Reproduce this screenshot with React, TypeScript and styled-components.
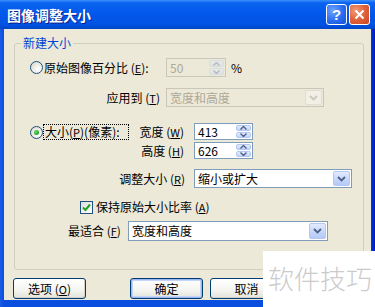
import React from 'react';
import styled, { createGlobalStyle } from 'styled-components';

const Global = createGlobalStyle`
	html, body {
		margin: 0;
		padding: 0;
		background: #fff;
	}
	body {
		font-family: "Noto Sans CJK SC", "DejaVu Sans", sans-serif;
		font-size: 12px;
	}
`

const Frame = styled.div`
	position: relative;
	width: 375px;
	height: 307px;
	display: flex;
	flex-direction: column;
	background: linear-gradient(90deg, #1B5CE6 0px, #0A4EDF 4px, #0A4EDF 368px, #0019C8 375px);
	overflow: hidden;
`

const TitleBar = styled.div`
	height: 29px;
	flex: none;
	display: flex;
	align-items: center;
	padding: 0 5px 0 7px;
	background: linear-gradient(180deg, #3C8FFA 0%, #0A64F0 10%, #0258EC 45%, #0052E2 85%, #0045C6 100%);
`

const Title = styled.span`
	flex: 1;
	color: #fff;
	font-weight: bold;
	font-size: 14px;
	letter-spacing: 0;
	text-shadow: 1px 1px #0A1D8A;
`

const CaptionButton = styled.div<{ $close?: boolean }>`
	width: 19px;
	height: 19px;
	margin-left: 2px;
	border: 1px solid #fff;
	border-radius: 3px;
	display: flex;
	align-items: center;
	justify-content: center;
	background: ${p => p.$close
		? 'radial-gradient(circle at 30% 30%, #F29A7A 0%, #E0623A 50%, #C9461F 100%)'
		: 'radial-gradient(circle at 30% 30%, #6FA3FF 0%, #2A6CF0 55%, #1450D8 100%)'};
	color: #fff;
	font-weight: bold;
	font-size: 15px;
	font-family: "Liberation Sans", sans-serif;
`

const Body = styled.div`
	flex: 1;
	margin: 0 4px 7px;
	background: #ECE9D8;
	display: flex;
	flex-direction: column;
	color: #000;
`

const Group = styled.fieldset`
	margin: 7px 7px 0 10px;
	padding: 0 0 28px;
	border: 1px solid #D0D0BF;
	border-radius: 3px;
	min-width: 0;
`

const Legend = styled.legend`
	margin-left: 6px;
	padding: 0 2px;
	line-height: 14px;
	color: #0046D5;
	font-size: 12px;
`

const Row = styled.div<{ $mt: number; $ml?: number; $top?: boolean }>`
	display: flex;
	align-items: ${p => (p.$top ? 'flex-start' : 'center')};
	margin-top: ${p => p.$mt}px;
	padding-left: ${p => p.$ml ?? 0}px;
	line-height: 14px;
	white-space: nowrap;
`

const Label = styled.span<{ $w?: number; $right?: boolean; $gap?: number }>`
	display: inline-block;
	width: ${p => (p.$w ? `${p.$w}px` : 'auto')};
	text-align: ${p => (p.$right ? 'right' : 'left')};
	margin-right: ${p => p.$gap ?? 0}px;
	flex: none;
`

const Key = styled.span`
	text-decoration: underline;
	font-size: 11px;
`

const Radio = styled.span<{ $checked?: boolean }>`
	box-sizing: border-box;
	width: 13px;
	height: 13px;
	border-radius: 50%;
	border: 1px solid #1C5180;
	background: radial-gradient(circle at 65% 65%, #fff 0%, #E6E6E0 60%, #D4D1C2 100%);
	display: flex;
	align-items: center;
	justify-content: center;
	margin-right: 1px;
	flex: none;
	&::after {
		content: '';
		display: ${p => (p.$checked ? 'block' : 'none')};
		width: 5px;
		height: 5px;
		border-radius: 50%;
		background: radial-gradient(circle at 35% 35%, #6CD96C 0%, #21A121 70%, #178017 100%);
	}
`

const Check = styled.span`
	box-sizing: border-box;
	width: 13px;
	height: 13px;
	border: 1px solid #1C5180;
	background: linear-gradient(135deg, #DCDCD7 0%, #fff 100%);
	display: flex;
	align-items: center;
	justify-content: center;
	margin-right: 3px;
	flex: none;
`

const Focus = styled.span`
	outline: 1px dotted #000;
	outline-offset: 0;
	padding: 0 1px;
	width: 82px;
	display: inline-block;
`

const Box = styled.div<{ $w: number; $h: number; $disabled?: boolean }>`
	box-sizing: border-box;
	width: ${p => p.$w}px;
	height: ${p => p.$h}px;
	border: 1px solid ${p => (p.$disabled ? '#C9C7BA' : '#7F9DB9')};
	background: ${p => (p.$disabled ? '#ECE9D8' : '#fff')};
	color: ${p => (p.$disabled ? '#ACA899' : '#000')};
	display: flex;
	align-items: center;
	padding: 0 1px 0 3px;
	flex: none;
`

const BoxText = styled.span`
	flex: 1;
	font-size: 12px;
	line-height: 14px;
`

const Spin = styled.div<{ $disabled?: boolean }>`
	width: 15px;
	height: calc(100% - 2px);
	display: flex;
	flex-direction: column;
	gap: 1px;
	opacity: ${p => (p.$disabled ? 0.35 : 1)};
`

const SpinHalf = styled.div`
	flex: 1;
	border-radius: 2px;
	background: linear-gradient(180deg, #E3EBFD 0%, #C3D4FB 100%);
	border: 1px solid #B4C7F3;
	display: flex;
	align-items: center;
	justify-content: center;
`

const DropBtn = styled.div<{ $disabled?: boolean }>`
	box-sizing: border-box;
	width: 17px;
	height: calc(100% - 2px);
	border-radius: 2px;
	border: 1px solid ${p => (p.$disabled ? '#E0DED3' : '#B4C7F3')};
	background: ${p => (p.$disabled
		? '#F2F0E6'
		: 'linear-gradient(180deg, #E3EBFD 0%, #C4D5FB 60%, #B5C9F7 100%)')};
	display: flex;
	align-items: center;
	justify-content: center;
`

const Percent = styled.span`
	margin-left: 5px;
`

const SizeColumn = styled.div`
	display: flex;
	flex-direction: column;
	gap: 2px;
`

const ButtonRow = styled.div`
	display: flex;
	margin-top: 8px;
	padding-left: 9px;
`

const Button = styled.button<{ $default?: boolean; $ml?: number }>`
	box-sizing: border-box;
	width: 73px;
	height: 21px;
	margin-left: ${p => p.$ml ?? 0}px;
	border: 1px solid #003C74;
	border-radius: 3px;
	background: linear-gradient(180deg, #FFFFFF 0%, #F4F4F0 60%, #E3E2DA 100%);
	box-shadow: ${p => (p.$default
		? 'inset 0 0 0 1px #9BB7F1, inset 0 0 0 2px #C5D5F8'
		: 'inset -1px -1px 0 #D6D0C5')};
	font-family: "Noto Sans CJK SC", sans-serif;
	font-size: 12px;
	line-height: 14px;
	color: #000;
	padding: 0;
`

const Watermark = styled.div`
	position: absolute;
	left: 263px;
	top: 251px;
	width: 112px;
	height: 56px;
	background: #fff;
	display: flex;
	align-items: center;
	padding-left: 5px;
	box-sizing: border-box;
	color: #CBCBCB;
	font-size: 26px;
	letter-spacing: 0;
	font-weight: 300;
	line-height: 1;
	padding-bottom: 2px;
`

function Chevron({ color = '#4D6185' }: { color?: string }) {
	return (
		<svg width="9" height="6" viewBox="0 0 9 6">
			<path d="M1 1 L4.5 4.5 L8 1" fill="none" stroke={color} strokeWidth="1.8"/>
		</svg>
	)
}

function Arrow({ up }: { up?: boolean }) {
	return (
		<svg width="7" height="4" viewBox="0 0 7 4">
			<path d={up ? 'M0.5 3.5 L3.5 0.5 L6.5 3.5' : 'M0.5 0.5 L3.5 3.5 L6.5 0.5'} fill="none" stroke="#4D6185" strokeWidth="1.4"/>
		</svg>
	)
}

function SpinBox({ value, width, height, disabled }: { value: string; width: number; height: number; disabled?: boolean }) {
	return (
		<Box $w={width} $h={height} $disabled={disabled}>
			<BoxText>{value}</BoxText>
			<Spin $disabled={disabled}>
				<SpinHalf><Arrow up/></SpinHalf>
				<SpinHalf><Arrow/></SpinHalf>
			</Spin>
		</Box>
	)
}

function Select({ value, width, height, disabled }: { value: string; width: number; height: number; disabled?: boolean }) {
	return (
		<Box $w={width} $h={height} $disabled={disabled}>
			<BoxText>{value}</BoxText>
			<DropBtn $disabled={disabled}>
				<Chevron color={disabled ? '#C9C7BA' : '#4D6185'}/>
			</DropBtn>
		</Box>
	)
}

export default function App() {
	return (
		<Frame>
			<Global/>
			<TitleBar>
				<Title>图像调整大小</Title>
				<CaptionButton>?</CaptionButton>
				<CaptionButton $close>
					<svg width="11" height="11" viewBox="0 0 11 11">
						<path d="M1.5 1.5 L9.5 9.5 M9.5 1.5 L1.5 9.5" stroke="#fff" strokeWidth="2"/>
					</svg>
				</CaptionButton>
			</TitleBar>
			<Body>
				<Group>
					<Legend>新建大小</Legend>
					<Row $mt={8} $ml={15}>
						<Radio/>
						<Label $w={122}>原始图像百分比 (<Key>E</Key>):</Label>
						<SpinBox value="50" width={60} height={19} disabled/>
						<Percent>%</Percent>
					</Row>
					<Row $mt={11}>
						<Label $w={145} $right $gap={6}>应用到 (<Key>T</Key>)</Label>
						<Select value="宽度和高度" width={158} height={19} disabled/>
					</Row>
					<Row $mt={16} $ml={15} $top>
						<Row $mt={2}>
							<Radio $checked/>
							<Focus>大小(<Key>P</Key>)(像素):</Focus>
						</Row>
						<SizeColumn>
							<Row $mt={0}>
								<Label $w={56} $right $gap={10}>宽度 (<Key>W</Key>)</Label>
								<SpinBox value="413" width={59} height={17}/>
							</Row>
							<Row $mt={0}>
								<Label $w={56} $right $gap={10}>高度 (<Key>H</Key>)</Label>
								<SpinBox value="626" width={59} height={17}/>
							</Row>
						</SizeColumn>
					</Row>
					<Row $mt={10}>
						<Label $w={170} $right $gap={9}>调整大小 (<Key>R</Key>)</Label>
						<Select value="缩小或扩大" width={158} height={19}/>
					</Row>
					<Row $mt={12} $ml={65}>
						<Check>
							<svg width="9" height="9" viewBox="0 0 9 9">
								<path d="M1 4.5 L3.5 7 L8 1.5" fill="none" stroke="#21A121" strokeWidth="2"/>
							</svg>
						</Check>
						<Label>保持原始大小比率 (<Key>A</Key>)</Label>
					</Row>
					<Row $mt={7} $ml={53}>
						<Label $w={60}>最适合 (<Key>F</Key>)</Label>
						<Select value="宽度和高度" width={200} height={20}/>
					</Row>
				</Group>
				<ButtonRow>
					<Button>选项 (<Key>O</Key>)</Button>
					<Button $default $ml={44}>确定</Button>
					<Button $ml={7}>取消</Button>
				</ButtonRow>
			</Body>
			<Watermark>软件技巧</Watermark>
		</Frame>
	)
}
